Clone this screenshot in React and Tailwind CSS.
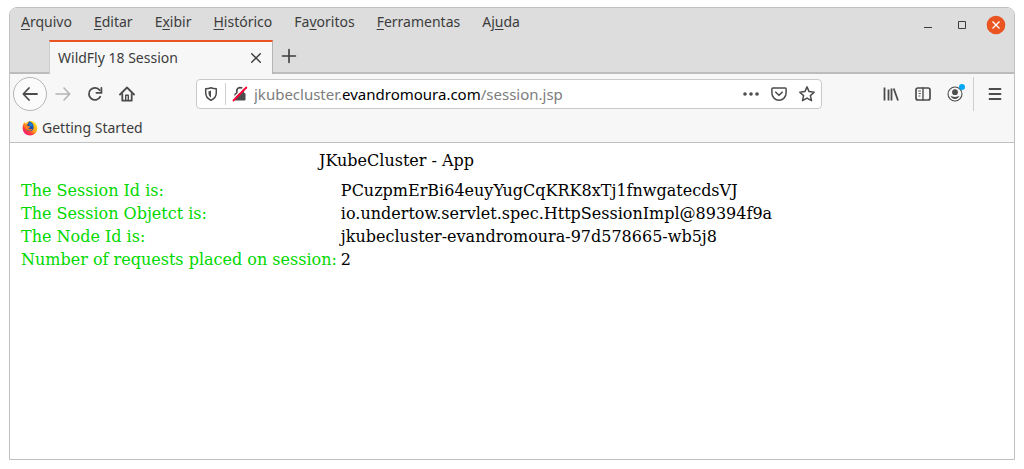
import React from "react";

const menus = [
  ["", "A", "rquivo"],
  ["", "E", "ditar"],
  ["E", "x", "ibir"],
  ["", "H", "istórico"],
  ["Fa", "v", "oritos"],
  ["", "F", "erramentas"],
  ["Aj", "u", "da"],
];

const rows = [
  ["The Session Id is:", "PCuzpmErBi64euyYugCqKRK8xTj1fnwgatecdsVJ"],
  ["The Session Objetct is:", "io.undertow.servlet.spec.HttpSessionImpl@89394f9a"],
  ["The Node Id is:", "jkubecluster-evandromoura-97d578665-wb5j8"],
  ["Number of requests placed on session:", "2"],
];

function Icon({ children, className = "size-4" }) {
  return (
    <svg
      viewBox="0 0 16 16"
      className={className}
      fill="none"
      stroke="currentColor"
      strokeWidth="1.8"
      strokeLinecap="round"
      strokeLinejoin="round"
      aria-hidden="true"
    >
      {children}
    </svg>
  );
}

function ToolButton({ label, className = "", children }) {
  return (
    <button
      type="button"
      aria-label={label}
      className={`flex size-8 shrink-0 items-center justify-center ${className}`}
    >
      {children}
    </button>
  );
}

function MenuBar() {
  return (
    <div className="flex h-8 items-start justify-between pr-2 pl-[11px]">
      <nav className="flex gap-[22px] pt-1" aria-label="Menu">
        {menus.map(([before, key, after]) => (
          <button key={before + key + after} type="button" className="text-sm leading-5">
            {before}
            <span className="underline underline-offset-2">{key}</span>
            {after}
          </button>
        ))}
      </nav>
      <div className="flex gap-[14px] pt-[7px]">
        <button type="button" aria-label="Minimizar" className="flex size-5 items-center justify-center">
          <svg viewBox="0 0 20 20" className="size-5" aria-hidden="true">
            <path d="M6 12.5h8" stroke="#3c3c3c" />
          </svg>
        </button>
        <button type="button" aria-label="Maximizar" className="flex size-5 items-center justify-center">
          <svg viewBox="0 0 20 20" className="size-5" aria-hidden="true">
            <path d="M6.5 6.5h7v7h-7z" fill="none" stroke="#3c3c3c" />
          </svg>
        </button>
        <button type="button" aria-label="Fechar" className="flex size-5 items-center justify-center">
          <svg viewBox="0 0 20 20" className="size-5" aria-hidden="true">
            <circle cx="10" cy="10" r="9.3" fill="#e95420" />
            <path d="M6.5 6.5l7 7M13.5 6.5l-7 7" stroke="#fff" strokeWidth="1.4" />
          </svg>
        </button>
      </div>
    </div>
  );
}

function TabBar() {
  return (
    <div className="flex h-[34px] border-b-2 border-[#bcbcbc] pl-[39px]">
      <div
        role="tab"
        aria-selected="true"
        className="-mb-0.5 flex w-56 items-center justify-between border-t-2 border-r border-l border-t-[#e95420] border-r-[#b4b4b4] border-l-[#cccccc] bg-[#f7f7f7] px-2"
      >
        <span className="text-sm leading-5">WildFly 18 Session</span>
        <button type="button" aria-label="Fechar aba" className="flex size-4 items-center justify-center">
          <Icon>
            <path d="M3.700 3.700l8.600 8.600M12.300 3.700l-8.600 8.600" strokeWidth="1.400" />
          </Icon>
        </button>
      </div>
      <button type="button" aria-label="Nova aba" className="flex w-8 items-center justify-center">
        <Icon>
          <path d="M8 1.500v13M1.500 8h13" strokeWidth="1.600" />
        </Icon>
      </button>
    </div>
  );
}

function AddressBar() {
  return (
    <div className="mx-[53px] flex h-[30px] min-w-0 flex-1 items-center rounded border border-[#c9c9c9] bg-white px-1.5">
      <button type="button" aria-label="Proteção" className="flex size-4 items-center justify-center">
        <Icon>
          <path d="M8 1.700C6.300 2.400 4.400 2.700 2.700 2.800v3.900c0 3.600 1.800 6 5.300 7.500 3.500-1.500 5.300-3.900 5.300-7.500V2.800C11.600 2.700 9.700 2.400 8 1.700z" strokeWidth="1.500" />
          <path d="M8 4.600c-.9.300-1.600.5-2.500.6v2c0 1.900.9 3.200 2.500 4.200z" fill="currentColor" stroke="none" />
        </Icon>
      </button>
      <span className="mx-1.5 h-[22px] w-px bg-[#cfcfcf]" />
      <button type="button" aria-label="Conexão não segura" className="flex size-4 items-center justify-center">
        <Icon>
          <path d="M4.800 7V4.800a3.200 3.200 0 0 1 6.400 0V7" />
          <rect x="2.500" y="7" width="11" height="7.500" rx="1" fill="currentColor" stroke="none" />
          <path d="M.2 13.500L12.700 .6" stroke="#fff" strokeWidth="1.500" />
          <path d="M1.500 14.500L14.300 1.500" stroke="#ff0039" strokeWidth="1.800" />
        </Icon>
      </button>
      <div className="ml-1.5 grid min-w-0 flex-1 items-center text-[15px] leading-5">
        <input
          type="text"
          aria-label="Endereço"
          defaultValue=""
          className="peer col-start-1 row-start-1 w-full min-w-0 bg-transparent text-black outline-none"
        />
        <span className="pointer-events-none col-start-1 row-start-1 truncate text-[#7d7d7d] peer-focus:invisible">
          jkubecluster.<span className="text-black">evandromoura.com</span>/session.jsp
        </span>
      </div>
      <div className="flex gap-3">
        <button type="button" aria-label="Ações da página">
          <Icon>
            <g fill="currentColor" stroke="none">
              <circle cx="2" cy="8" r="1.800" />
              <circle cx="8" cy="8" r="1.800" />
              <circle cx="14" cy="8" r="1.800" />
            </g>
          </Icon>
        </button>
        <button type="button" aria-label="Salvar no Pocket">
          <Icon>
            <path d="M1.800 1.900h12.400a.9.900 0 0 1 .9.900v4.300a7.100 7.100 0 0 1-14.200 0V2.800a.9.900 0 0 1 .9-.9z" strokeWidth="1.500" />
            <path d="M4.800 6.200L8 9.300l3.200-3.100" strokeWidth="1.600" />
          </Icon>
        </button>
        <button type="button" aria-label="Adicionar aos favoritos">
          <Icon>
            <path d="M8 .9l2.100 4.700 5.100.6-3.800 3.400 1.100 5.100L8 12.100l-4.500 2.600 1.100-5.100L.8 6.200l5.100-.6z" strokeWidth="1.500" />
          </Icon>
        </button>
      </div>
    </div>
  );
}

function Toolbar() {
  return (
    <div className="flex h-[39px] items-center px-[3px] text-[#4c4c4c]">
      <button
        type="button"
        aria-label="Voltar"
        className="flex size-[34px] shrink-0 items-center justify-center rounded-full border border-[#b5b5b5] bg-[#fbfbfb]"
      >
        <Icon>
          <path d="M15 8H1.500M7 2L1.300 8 7 14" strokeWidth="1.800" />
        </Icon>
      </button>
      <ToolButton label="Avançar" className="text-[#b4b4b4]">
        <Icon>
          <path d="M1 8h13.500M9 2l5.700 6L9 14" strokeWidth="1.600" />
        </Icon>
      </ToolButton>
      <ToolButton label="Recarregar">
        <Icon>
          <path d="M13.200 10.800A6 6 0 1 1 12.700 4.300" />
          <path d="M14.400 1.800v5H9.400" strokeLinejoin="miter" />
        </Icon>
      </ToolButton>
      <ToolButton label="Página inicial">
        <Icon>
          <path d="M1 8.500l7-7 7 7" />
          <path d="M3.300 8v6.700h9.400V8" />
          <path d="M6.700 14.500V9.300h2.600v5.200" strokeWidth="1.400" />
        </Icon>
      </ToolButton>
      <AddressBar />
      <ToolButton label="Biblioteca">
        <Icon>
          <path d="M1.500 1.500v13M5.500 3.500v11M8.500 2.500v12M10.700 2.500l4.300 12" strokeLinecap="butt" />
        </Icon>
      </ToolButton>
      <ToolButton label="Barra lateral">
        <Icon>
          <rect x="1" y="2" width="14" height="12" rx="2" strokeWidth="1.700" />
          <path d="M8 2v12" strokeWidth="1.400" />
          <path d="M3.500 5h2M4 7.500h1.500M4 10h1" strokeWidth=".9" />
        </Icon>
      </ToolButton>
      <ToolButton label="Conta" className="relative">
        <Icon>
          <circle cx="8" cy="8" r="7" strokeWidth="1.100" />
          <circle cx="8" cy="6.200" r="2.900" fill="currentColor" stroke="none" />
          <path d="M3.500 9.800c1 .8 2.600 1.100 4.500 1.100s3.500-.3 4.500-1.100c-.5 2-2.300 3.200-4.500 3.200s-4-1.200-4.500-3.200z" fill="currentColor" stroke="none" />
        </Icon>
        <span className="absolute top-1.5 right-1.5 size-1.5 rounded-full bg-[#00a8f3]" />
      </ToolButton>
      <span className="mr-[5px] ml-0.5 h-[34px] w-px shrink-0 bg-[#cfcfcf]" />
      <ToolButton label="Abrir menu">
        <Icon>
          <path d="M2.500 3h11M2.500 8h11M2.500 13h11" strokeWidth="1.800" />
        </Icon>
      </ToolButton>
    </div>
  );
}

function FirefoxLogo() {
  return (
    <svg viewBox="0 0 16 16" className="size-4" aria-hidden="true">
      <defs>
        <linearGradient id="flame" x1="0.85" y1="0.1" x2="0.2" y2="0.9">
          <stop offset="0" stopColor="#ffe226" />
          <stop offset="0.5" stopColor="#ffa01e" />
          <stop offset="0.75" stopColor="#ff3b3f" />
          <stop offset="1" stopColor="#f01c6c" />
        </linearGradient>
      </defs>
      <path d="M2.300 2.200L3.700 3.500C5 1.800 7 .8 9 .9c3 .2 6.400 3.300 6.400 7.300a7.400 7.400 0 0 1-14.800 0c0-2.400.6-4.600 1.700-6z" fill="url(#flame)" />
      <path d="M7 1.300c2.300.5 4.700 2.500 4.700 5.700 0 2.700-1.800 4.300-4 4.300-2.300 0-3.900-1.400-3.900-3.300C3.800 5.500 6 5 7 1.300z" fill="#1f4fa8" />
      <path d="M7 2.300c2.400.6 4 2.300 3.900 4.700-1-1.100-2-1.500-3.400-1.300z" fill="#168bd8" />
      <path d="M2.200 5.800c1.300-.8 2.700-.7 4 .1.700.4 1.500.3 2.200.6-.4 1-1.600 1.200-2 1.900 1 1.400 2.700.4 3.700.8-1 1.700-3 1.900-4.600 1.100-1.800-.8-2.900-2.600-3.300-4.500z" fill="#ff7d1d" />
    </svg>
  );
}

export default function App() {
  return (
    <div className="flex min-h-screen flex-col bg-white px-[9px] pt-[7px] pb-[9px] font-['Noto_Sans',sans-serif] text-[#3c3c3c]">
      <div className="flex flex-1 flex-col overflow-hidden rounded-t-lg border border-[#c0c0c0]">
        <header className="bg-[#dddddd]">
          <MenuBar />
          <TabBar />
        </header>
        <div className="border-b border-[#c0c0c0] bg-[#f7f7f7]">
          <Toolbar />
          <div className="flex h-[29px] items-center pl-3">
            <a href="#getting-started" className="flex items-center gap-1 text-sm leading-5">
              <FirefoxLogo />
              Getting Started
            </a>
          </div>
        </div>
        <main className="flex-1 bg-white px-2 pt-1.5 font-['DejaVu_Serif',serif] text-base leading-[19px] text-black">
          <table className="border-separate border-spacing-x-[2px] border-spacing-y-[2px]">
            <caption className="pt-0.5 pb-2">JKubeCluster - App</caption>
            <tbody>
              {rows.map(([label, value]) => (
                <tr key={label}>
                  <th scope="row" className="p-px text-left font-normal whitespace-nowrap text-[#00d800]">
                    {label}
                  </th>
                  <td className="p-px">{value}</td>
                </tr>
              ))}
            </tbody>
          </table>
        </main>
      </div>
    </div>
  );
}
